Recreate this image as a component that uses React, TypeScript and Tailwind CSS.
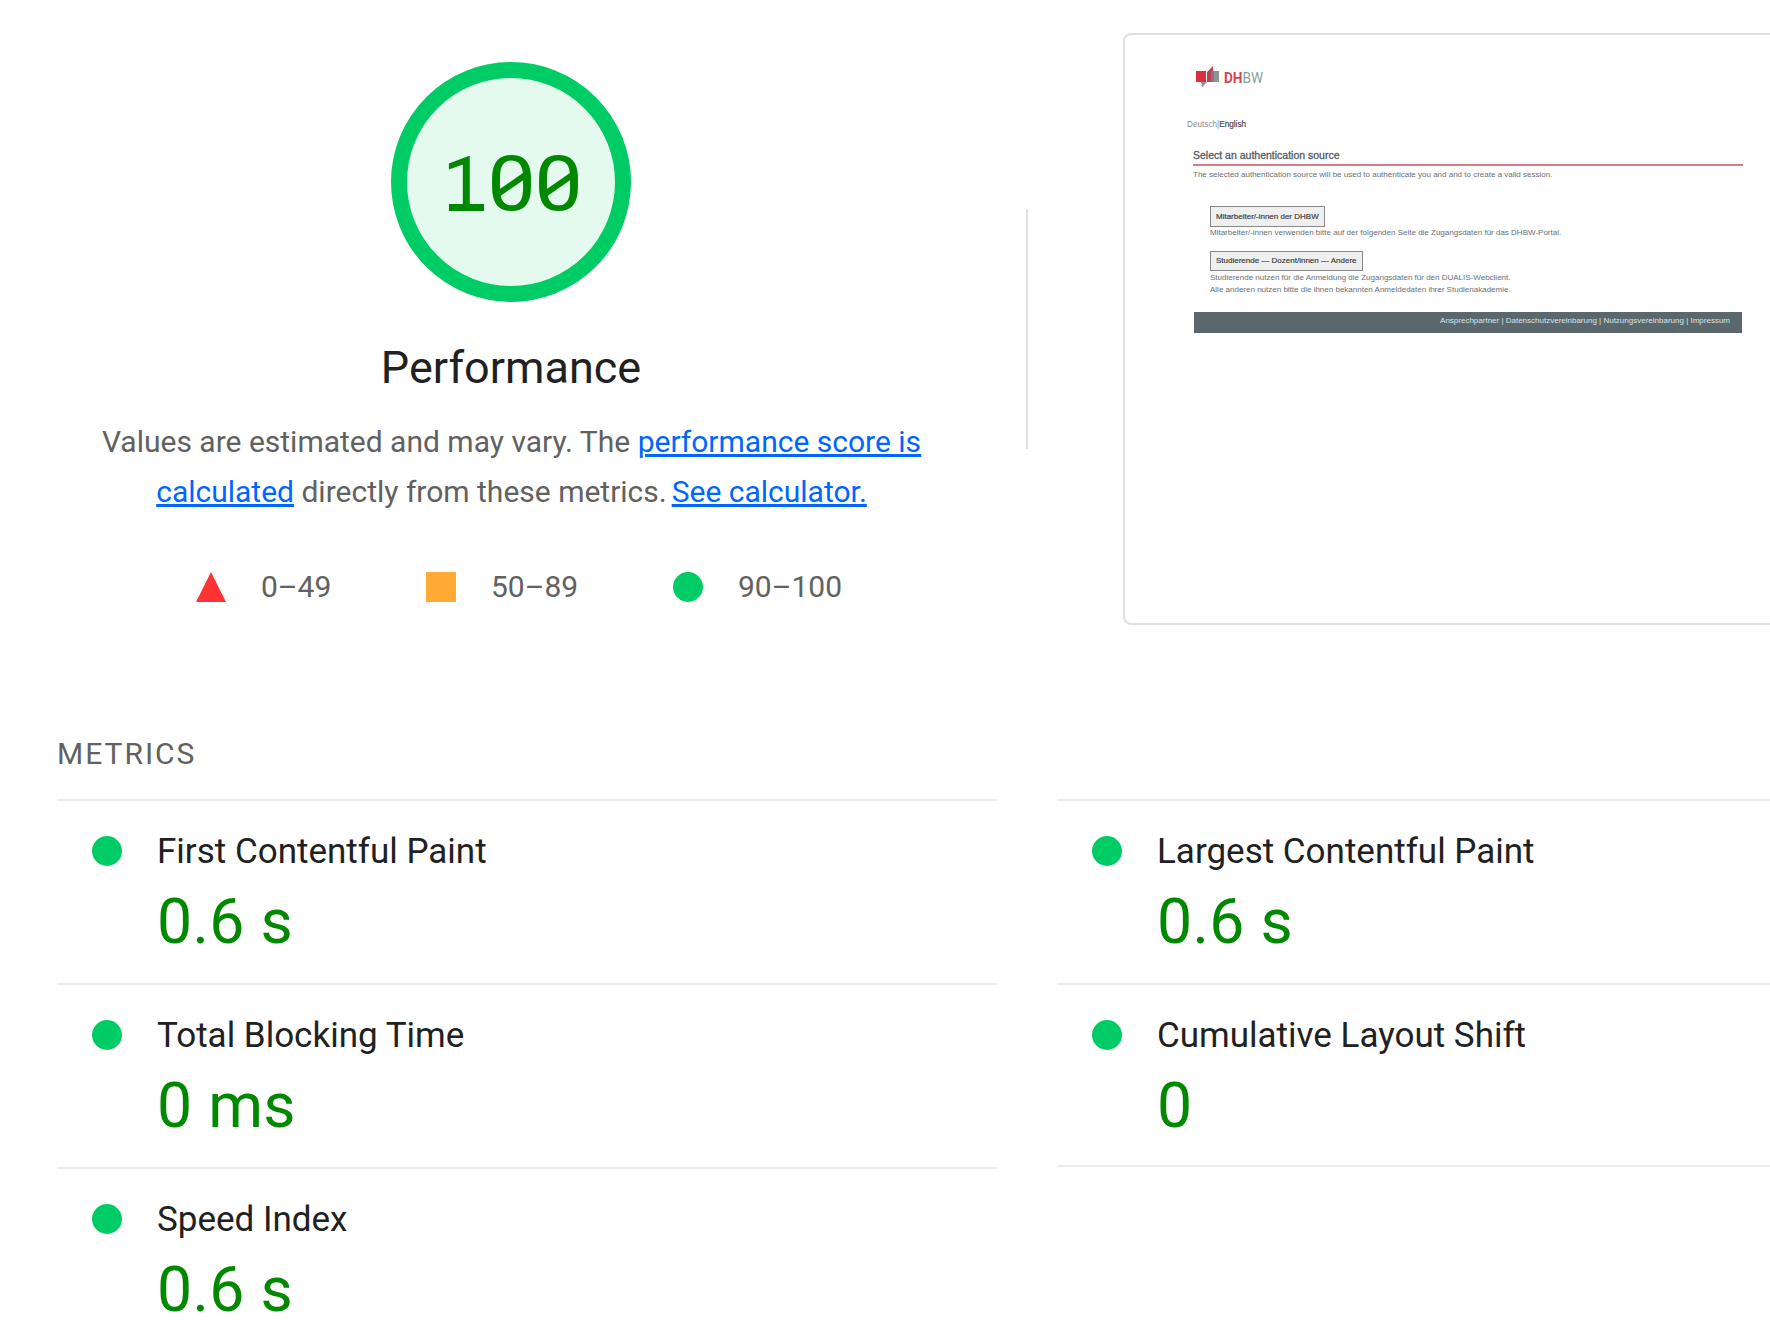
import React from "react";

const leftMetrics = [
  { title: "First Contentful Paint", value: "0.6 s" },
  { title: "Total Blocking Time", value: "0 ms" },
  { title: "Speed Index", value: "0.6 s" },
];
const rightMetrics = [
  { title: "Largest Contentful Paint", value: "0.6 s" },
  { title: "Cumulative Layout Shift", value: "0" },
];

function Metric({ title, value }: { title: string; value: string }) {
  return (
    <div className="h-[184px] border-t-2 border-[#ebebeb] pt-[30px] pl-[35px]">
      <div className="flex h-10 items-center">
        <span className="size-[30px] rounded-full bg-[#00cc66]" />
        <span className="ml-[35px] pt-[2px] text-[35px] leading-10 text-[#212121]">{title}</span>
      </div>
      <div className="mt-[21px] ml-[65px] text-[62.5px] leading-[60px] tracking-[0.3px] text-[#008800]">{value}</div>
    </div>
  );
}

function SlashedZero() {
  return (
    <span className="relative flex w-[47px] justify-center">
      <span className="inline-block scale-x-[1.13]">0</span>
      <svg className="absolute top-0 left-0" width="47" height="80" viewBox="0 0 47 80" fill="none">
        <path d="M10 50L38 30.5" stroke="#008800" strokeWidth="6" />
      </svg>
    </span>
  );
}

function Gauge() {
  return (
    <div className="flex size-60 items-center justify-center rounded-full border-[16px] border-[#00cc66] bg-[#e5faef]">
      <div className="mt-[3px] flex h-20 text-[76.5px] leading-[80px] text-[#008800]">
        <span className="relative flex w-[47px] justify-center">
          <span>1</span>
          <span className="absolute top-[60px] left-[8px] h-[7px] w-[35px] bg-[#008800]" />
        </span>
        <SlashedZero />
        <SlashedZero />
      </div>
    </div>
  );
}

function Summary() {
  return (
    <section className="flex w-[1022px] flex-col items-center pt-[62px]">
      <Gauge />
      <h1 className="mt-[41px] text-[45px] leading-[50px] text-[#212121]">Performance</h1>
      <p className="mt-6 pl-px text-center text-[30px] leading-[50px] text-[#616161]">
        Values are estimated and may vary. The{" "}
        <a className="text-[#0066ff] underline">performance score is</a>
        <br />
        <a className="text-[#0066ff] underline">calculated</a> directly from these metrics.{" "}
        <a className="-ml-[2.5px] text-[#0066ff] underline">See calculator.</a>
      </p>
      <div className="mt-[55px] flex w-[1022px] pl-[196px] text-[30px] leading-[30px] text-[#616161]">
        <div className="flex w-[230px] gap-[35px]">
          <svg width="30" height="30" viewBox="0 0 30 30">
            <path d="M15 0L30 30H0Z" fill="#ff3333" />
          </svg>
          0–49
        </div>
        <div className="flex w-[247px] gap-[35px]">
          <span className="size-[30px] bg-[#ffaa33]" />
          50–89
        </div>
        <div className="flex gap-[35px]">
          <span className="size-[30px] rounded-full bg-[#00cc66]" />
          90–100
        </div>
      </div>
    </section>
  );
}

function Thumbnail() {
  return (
    <div className="mt-[33px] ml-[95px] h-[592px] w-[700px] shrink-0 rounded-lg border-2 border-[#e0e0e0] bg-white">
      <div className="flex w-[700px] flex-col font-['Liberation_Sans',sans-serif] whitespace-nowrap text-[#6a6f73]">
        <div className="mt-[31px] ml-[71px] flex h-[24px] items-center">
          <svg width="24" height="24" viewBox="0 0 24 24">
            <path d="M0 5H10V16H0Z" fill="#dc2e3c" />
            <path d="M13 5H23V16H13Z" fill="#8d9499" />
            <path d="M11 6L17 0V5L15 7V16H11Z" fill="#b84452" />
            <path d="M15 5H18V16H15Z" fill="#966f79" />
            <path d="M5 16H11L6 21.5Z" fill="#998d91" />
          </svg>
          <span className="ml-1 inline-block origin-left scale-x-[0.88] font-['Roboto'] text-[15.5px] leading-[24px] font-bold text-[#d64450]">
            DH<span className="font-normal text-[#86a096]">BW</span>
          </span>
        </div>
        <div className="mt-[28px] ml-[62px] h-[13px] text-[8.2px] leading-[13px] text-[#8c8c8c]">
          Deutsch|<span className="text-[#444] [-webkit-text-stroke:0.2px_#555]">English</span>
        </div>
        <div className="mt-[16px] ml-[68px] h-[17px] text-[10.5px] leading-[17px] text-[#44525a] [-webkit-text-stroke:0.3px_#5a676e]">
          Select an authentication source
        </div>
        <div className="ml-[68px] h-[2px] w-[550px] bg-[#d47c88]" />
        <div className="mt-[3px] ml-[68px] h-3 text-[8px] leading-3">
          The selected authentication source will be used to authenticate you and and to create a valid session.
        </div>
        <div className="mt-[25px] ml-[85px] h-[21px] w-[115px] border border-[#888] bg-[#efefef] pl-[5px] text-[8px] leading-[19px] text-[#333] [-webkit-text-stroke:0.2px_#555]">
          Mitarbeiter/-innen der DHBW
        </div>
        <div className="ml-[85px] h-3 text-[8px] leading-3">
          Mitarbeiter/-innen verwenden bitte auf der folgenden Seite die Zugangsdaten für das DHBW-Portal.
        </div>
        <div className="mt-[12px] ml-[85px] h-[20px] w-[153px] border border-[#888] bg-[#efefef] pl-[5px] text-[8px] leading-[18px] text-[#333] [-webkit-text-stroke:0.2px_#555]">
          Studierende --- Dozent/innen --- Andere
        </div>
        <div className="mt-px ml-[85px] h-3 text-[8px] leading-3">
          Studierende nutzen für die Anmeldung die Zugangsdaten für den DUALIS-Webclient.
        </div>
        <div className="ml-[85px] h-3 text-[8px] leading-3">
          Alle anderen nutzen bitte die ihnen bekannten Anmeldedaten ihrer Studienakademie.
        </div>
        <div className="mt-[16px] ml-[69px] h-[21px] w-[548px] bg-[#5a686e] pr-[12px] text-right text-[8px] leading-[18px] text-[#dde3e6]">
          Ansprechpartner | Datenschutzvereinbarung | Nutzungsvereinbarung | Impressum
        </div>
      </div>
    </div>
  );
}

export default function App() {
  return (
    <main className="h-[1333px] w-[1770px] overflow-hidden bg-white font-['Roboto',sans-serif]">
      <div className="flex h-[734px]">
        <Summary />
        <div className="mt-[209px] ml-[4px] h-[240px] w-[2px] shrink-0 bg-[#e0e0e0]" />
        <Thumbnail />
      </div>
      <h2 className="ml-[57px] h-[65px] text-[30px] leading-10 tracking-[2px] text-[#616161]">METRICS</h2>
      <div className="ml-[57px] grid w-[1940px] grid-cols-2 items-start gap-[60px]">
        <div>
          {leftMetrics.map((m) => (
            <Metric key={m.title} title={m.title} value={m.value} />
          ))}
        </div>
        <div className="h-[368px] border-b-2 border-[#ebebeb]">
          {rightMetrics.map((m) => (
            <Metric key={m.title} title={m.title} value={m.value} />
          ))}
        </div>
      </div>
    </main>
  );
}
